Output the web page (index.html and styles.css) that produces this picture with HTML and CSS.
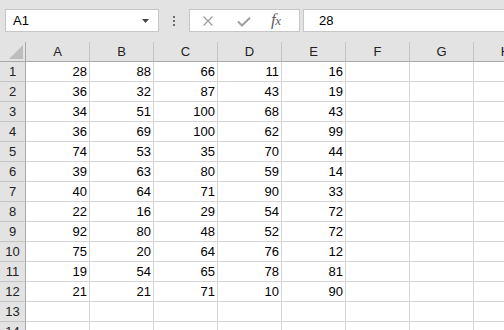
FILE: index.html
```html
<!DOCTYPE html>
<html>
<head>
<meta charset="utf-8">
<link rel="stylesheet" href="styles.css">
</head>
<body>
<div class="toolbar">
  <div class="namebox"><span class="nb-text">A1</span><svg class="caret" width="7" height="4" viewBox="0 0 7 4"><path d="M0 0H7L3.5 4Z" fill="#444"/></svg></div>
  <div class="dots"><i></i><i></i><i></i></div>
  <div class="fxbox">
    <svg class="ic-x" width="10" height="10" viewBox="0 0 10 10"><path d="M0.5 0.5L9.5 9.5M9.5 0.5L0.5 9.5" stroke="#9a9a9a" stroke-width="1.2" fill="none"/></svg>
    <svg class="ic-check" width="14" height="10" viewBox="0 0 14 10"><path d="M1 4.5L5 8.5L13 0.8" stroke="#a0a0a0" stroke-width="2" fill="none"/></svg>
    <span class="fx">f<span class="fx-x">x</span></span>
  </div>
  <div class="formula">28</div>
</div>
<div class="grid">
  <div class="corner"><svg width="14" height="14" viewBox="0 0 14 14"><path d="M14 0V14H0Z" fill="#bdbdbd"/></svg></div>
  <div class="ch">A</div><div class="ch">B</div><div class="ch">C</div><div class="ch">D</div><div class="ch">E</div><div class="ch">F</div><div class="ch">G</div><div class="ch">H</div>

  <div class="rh">1</div><div class="c">28</div><div class="c">88</div><div class="c">66</div><div class="c">11</div><div class="c">16</div><div class="c"></div><div class="c"></div><div class="c"></div>
  <div class="rh">2</div><div class="c">36</div><div class="c">32</div><div class="c">87</div><div class="c">43</div><div class="c">19</div><div class="c"></div><div class="c"></div><div class="c"></div>
  <div class="rh">3</div><div class="c">34</div><div class="c">51</div><div class="c">100</div><div class="c">68</div><div class="c">43</div><div class="c"></div><div class="c"></div><div class="c"></div>
  <div class="rh">4</div><div class="c">36</div><div class="c">69</div><div class="c">100</div><div class="c">62</div><div class="c">99</div><div class="c"></div><div class="c"></div><div class="c"></div>
  <div class="rh">5</div><div class="c">74</div><div class="c">53</div><div class="c">35</div><div class="c">70</div><div class="c">44</div><div class="c"></div><div class="c"></div><div class="c"></div>
  <div class="rh">6</div><div class="c">39</div><div class="c">63</div><div class="c">80</div><div class="c">59</div><div class="c">14</div><div class="c"></div><div class="c"></div><div class="c"></div>
  <div class="rh">7</div><div class="c">40</div><div class="c">64</div><div class="c">71</div><div class="c">90</div><div class="c">33</div><div class="c"></div><div class="c"></div><div class="c"></div>
  <div class="rh">8</div><div class="c">22</div><div class="c">16</div><div class="c">29</div><div class="c">54</div><div class="c">72</div><div class="c"></div><div class="c"></div><div class="c"></div>
  <div class="rh">9</div><div class="c">92</div><div class="c">80</div><div class="c">48</div><div class="c">52</div><div class="c">72</div><div class="c"></div><div class="c"></div><div class="c"></div>
  <div class="rh">10</div><div class="c">75</div><div class="c">20</div><div class="c">64</div><div class="c">76</div><div class="c">12</div><div class="c"></div><div class="c"></div><div class="c"></div>
  <div class="rh">11</div><div class="c">19</div><div class="c">54</div><div class="c">65</div><div class="c">78</div><div class="c">81</div><div class="c"></div><div class="c"></div><div class="c"></div>
  <div class="rh">12</div><div class="c">21</div><div class="c">21</div><div class="c">71</div><div class="c">10</div><div class="c">90</div><div class="c"></div><div class="c"></div><div class="c"></div>
  <div class="rh">13</div><div class="c"></div><div class="c"></div><div class="c"></div><div class="c"></div><div class="c"></div><div class="c"></div><div class="c"></div><div class="c"></div>
  <div class="rh">14</div><div class="c"></div><div class="c"></div><div class="c"></div><div class="c"></div><div class="c"></div><div class="c"></div><div class="c"></div><div class="c"></div>
</div>
</body>
</html>
```

FILE: styles.css
```css
html, body {
  margin: 0;
  padding: 0;
  width: 504px;
  height: 330px;
  overflow: hidden;
  background: #e3e3e3;
  font-family: "Liberation Sans", Arial, sans-serif;
  font-size: 13px;
  color: #000;
}

.toolbar {
  height: 42px;
  box-sizing: border-box;
  padding-top: 9px;
  display: flex;
  align-items: flex-start;
  background: #e3e3e3;
}

.namebox {
  margin-left: 5px;
  width: 154px;
  height: 23px;
  box-sizing: border-box;
  border: 1px solid #c6c6c6;
  background: #fff;
  display: flex;
  align-items: center;
  padding-left: 7px;
  padding-right: 9px;
}

.nb-text {
  flex: 1;
  color: #000;
}

.caret {
  display: block;
  margin-top: 1px;
}

.dots {
  width: 30px;
  height: 23px;
  display: flex;
  flex-direction: column;
  align-items: center;
  justify-content: center;
  gap: 2px;
}

.dots i {
  display: block;
  width: 2px;
  height: 2px;
  background: #6e6e6e;
}

.fxbox {
  width: 111px;
  height: 23px;
  box-sizing: border-box;
  border: 1px solid #c6c6c6;
  background: #fff;
  display: flex;
  align-items: center;
}

.ic-x {
  display: block;
  margin-left: 13px;
}

.ic-check {
  display: block;
  margin-left: 24px;
  margin-top: 2px;
}

.fx {
  margin-left: 20px;
  font-family: "Liberation Serif", "Times New Roman", serif;
  font-style: italic;
  font-size: 17px;
  line-height: 20px;
  color: #5f5f5f;
  letter-spacing: -0.5px;
}

.fx-x {
  font-size: 13px;
}

.formula {
  margin-left: 3px;
  flex: 1;
  height: 23px;
  box-sizing: border-box;
  border: 1px solid #c6c6c6;
  border-right: none;
  background: #fff;
  padding-left: 15px;
  line-height: 21px;
}

.grid {
  display: grid;
  grid-template-columns: 26px repeat(8, 64px);
  grid-auto-rows: 20px;
}

.grid > div {
  box-sizing: border-box;
}

.corner {
  border-right: 1px solid #a8a8a8;
  border-bottom: 1px solid #a8a8a8;
  display: flex;
  align-items: flex-end;
  justify-content: flex-end;
  padding: 0 2px 2px 0;
}

.corner svg {
  display: block;
}

.ch {
  border-right: 1px solid #c4c4c4;
  border-bottom: 1px solid #a8a8a8;
  text-align: center;
  line-height: 19px;
  color: #222;
}

.rh {
  border-right: 1px solid #a8a8a8;
  border-bottom: 1px solid #c4c4c4;
  text-align: center;
  line-height: 19px;
  color: #222;
}

.c {
  background: #fff;
  border-right: 1px solid #d4d4d4;
  border-bottom: 1px solid #d4d4d4;
  text-align: right;
  padding-right: 2px;
  line-height: 20px;
}
```
